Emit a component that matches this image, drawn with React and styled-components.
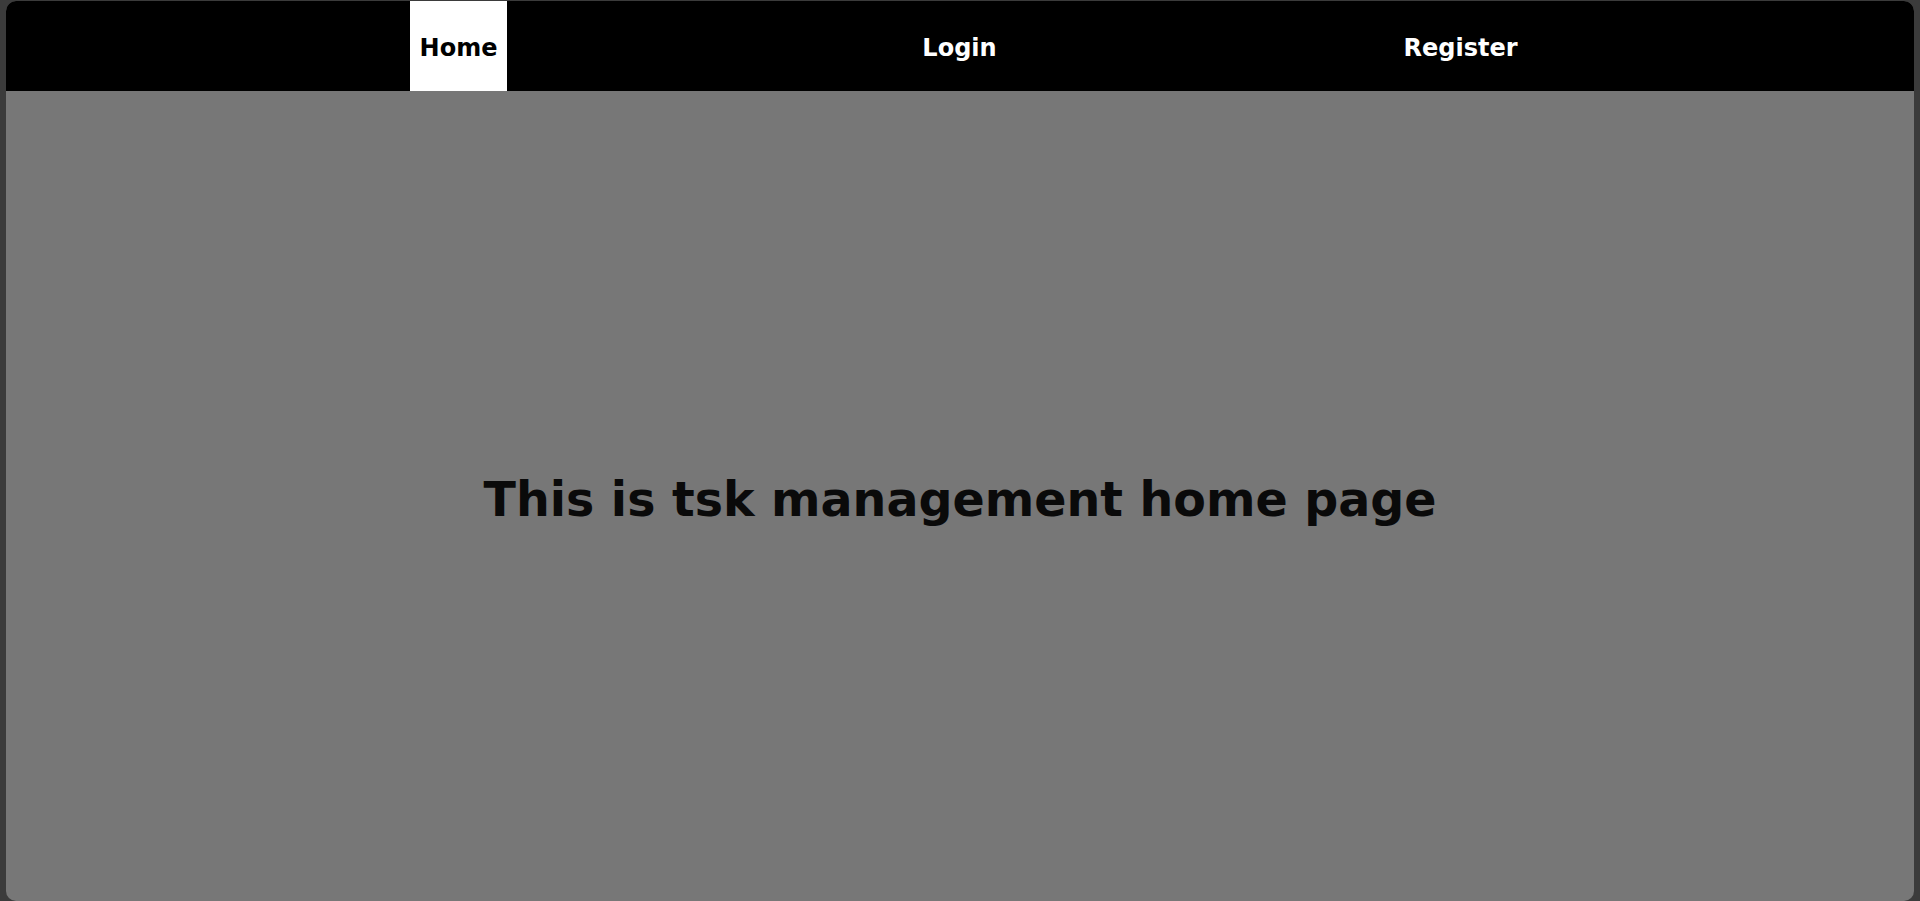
import React from "react"
import styled, { createGlobalStyle } from "styled-components"

const GlobalStyle = createGlobalStyle`
    html, body {
        margin: 0;
        padding: 0;
        background-color: #3b3b3b;
        font-family: "DejaVu Sans", Verdana, sans-serif;
        overflow: hidden;
    }
`

const AppDiv = styled.div`
    display: flex;
    flex-direction: column;
    box-sizing: border-box;
    margin: 1px 6px 0 6px;
    height: calc(100vh - 1px);
    border-radius: 10px;
    overflow: hidden;
    background-color: #777777;
`

const NavBar = styled.nav`
    display: flex;
    justify-content: center;
    height: 90px;
    background-color: #000;
`

const NavList = styled.ul`
    display: grid;
    grid-template-columns: repeat(3, 501px);
    justify-items: center;
    margin: 0 0 0 -1px;
    padding: 0;
    list-style: none;
`

const NavLink = styled.a`
    display: flex;
    align-items: center;
    box-sizing: border-box;
    height: 90px;
    padding: 3px 10px 0 10px;
    font-size: 24px;
    font-weight: bold;
    text-decoration: none;
    cursor: pointer;
    color: ${(props) => (props.active ? "#000" : "#fff")};
    background-color: ${(props) => (props.active ? "#fff" : "transparent")};
`

const Main = styled.main`
    display: flex;
    flex: 1;
    align-items: center;
    justify-content: center;
    padding-top: 6px;
`

const Title = styled.h1`
    margin: 0;
    font-size: 47.5px;
    font-weight: bold;
    color: #0a0a0a;
`

const App = () => {
    return (
        <>
            <GlobalStyle />
            <AppDiv>
                <NavBar>
                    <NavList>
                        <li><NavLink active>Home</NavLink></li>
                        <li><NavLink>Login</NavLink></li>
                        <li><NavLink>Register</NavLink></li>
                    </NavList>
                </NavBar>
                <Main>
                    <Title>This is tsk management home page</Title>
                </Main>
            </AppDiv>
        </>
    )
}

export default App
